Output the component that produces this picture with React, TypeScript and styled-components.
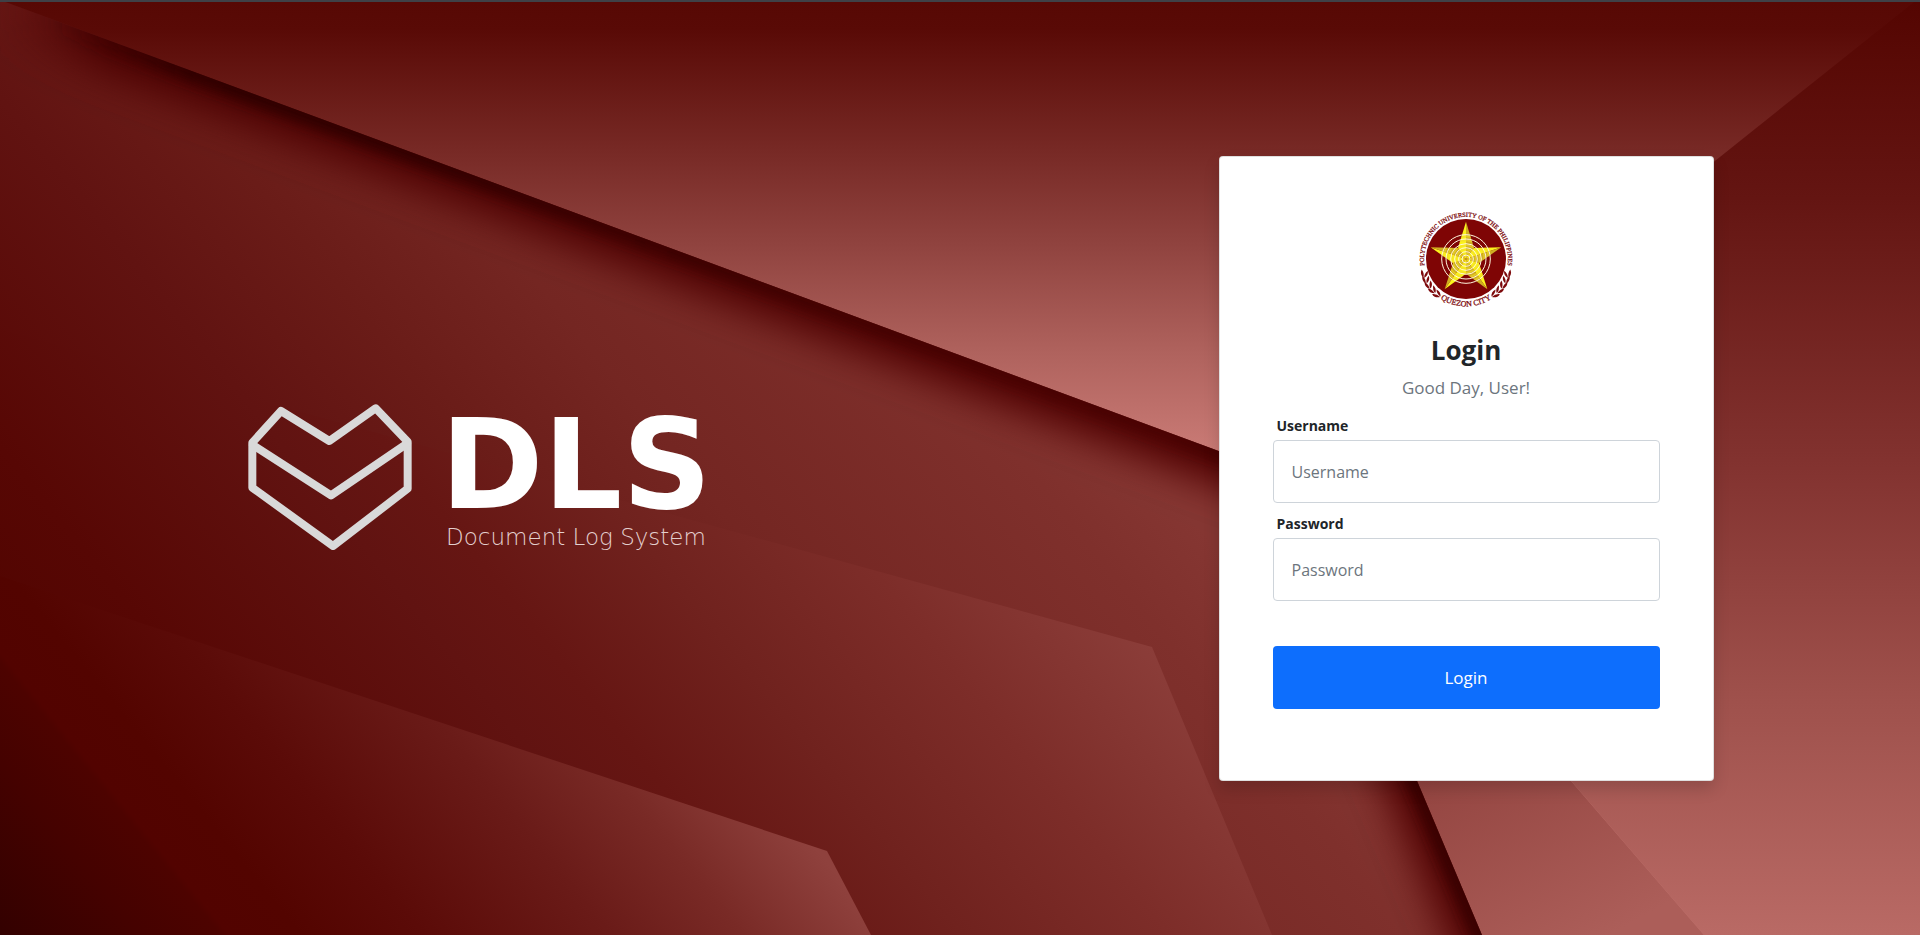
import React from "react";
import styled, { createGlobalStyle } from "styled-components";

const GlobalStyle = createGlobalStyle`
  *, *::before, *::after { box-sizing: border-box; }
  body {
    margin: 0;
    background: #520603;
    color: #212529;
    font-family: "Open Sans", "Noto Sans", sans-serif;
  }
`;

const Page = styled.div`
  position: relative;
  isolation: isolate;
  display: flex;
  flex-direction: column;
  min-height: 100vh;
  overflow: hidden;
  border-top: 2px solid #3f4147;
`;

const BackdropSvg = styled.svg`
  position: absolute;
  inset: 0;
  z-index: -1;
  width: 100%;
  height: 100%;
`;

const Main = styled.main`
  flex: 1;
  display: grid;
  grid-template-columns: 1fr 1fr;
  align-items: center;
`;

const Brand = styled.section`
  display: flex;
  justify-content: center;
  align-items: center;
  gap: 28px;
  padding-top: 16px;
`;

const BrandMark = styled.svg`
  width: 164px;
  height: 146px;
  flex: none;
`;

const BrandText = styled.div`
  display: flex;
  flex-direction: column;
  align-items: center;
`;

const BrandName = styled.h1`
  margin: 0;
  color: #fff;
  font-family: "DejaVu Sans", sans-serif;
  font-size: 124px;
  font-weight: 700;
  line-height: 120px;
`;

const Tagline = styled.p`
  margin: 0;
  color: #e3cfce;
  font-family: "DejaVu Sans", sans-serif;
  font-size: 23px;
  font-weight: 200;
  line-height: 24px;
`;

const FormColumn = styled.section`
  display: flex;
  justify-content: center;
  padding-left: 52px;
`;

const Card = styled.div`
  width: 495px;
  padding: 52px 53px 71px;
  display: flex;
  flex-direction: column;
  align-items: center;
  background: #fff;
  background-clip: border-box;
  border: 1px solid rgba(0, 0, 0, 0.125);
  border-radius: 4px;
  box-shadow: 0 8px 16px rgba(0, 0, 0, 0.15);
`;

const SealSvg = styled.svg`
  width: 100px;
  height: 100px;
`;

const Title = styled.h2`
  margin: 25px 0 0;
  font-size: 26px;
  font-weight: 700;
  line-height: 32px;
`;

const Greeting = styled.p`
  margin: 10px 0 14px;
  color: #6c757d;
  font-size: 17px;
  line-height: 24px;
`;

const Form = styled.form`
  width: 100%;
  display: flex;
  flex-direction: column;
`;

const Field = styled.div`
  display: flex;
  flex-direction: column;
  gap: 2px;
  margin-bottom: 9px;
`;

const Label = styled.label`
  padding: 0 4px;
  font-size: 14px;
  font-weight: 700;
  line-height: 24px;
`;

const TextInput = styled.input`
  width: 100%;
  height: 63px;
  padding: 16px 18px;
  color: #212529;
  background: #fff;
  border: 1px solid #ced4da;
  border-radius: 4px;
  font: inherit;
  font-size: 16px;

  &::placeholder {
    color: #6c757d;
    opacity: 1;
  }
`;

const SubmitButton = styled.button`
  height: 63px;
  margin-top: 36px;
  color: #fff;
  background: #0d6efd;
  border: 0;
  border-radius: 4px;
  font: inherit;
  font-size: 17px;
  cursor: pointer;
`;

function Backdrop() {
  return (
    <BackdropSvg viewBox="0 0 1920 933" preserveAspectRatio="none" aria-hidden="true">
      <defs>
        <linearGradient id="sky" gradientUnits="userSpaceOnUse" x1="0" y1="0" x2="0" y2="460">
          <stop offset="0" stopColor="#570804" />
          <stop offset="0.06" stopColor="#590a06" />
          <stop offset="0.33" stopColor="#782a26" />
          <stop offset="0.52" stopColor="#8f423e" />
          <stop offset="0.76" stopColor="#af625d" />
          <stop offset="1" stopColor="#cc7d78" />
        </linearGradient>
        <linearGradient id="right" gradientUnits="userSpaceOnUse" x1="0" y1="0" x2="0" y2="933">
          <stop offset="0" stopColor="#540501" />
          <stop offset="0.21" stopColor="#641512" />
          <stop offset="0.5" stopColor="#833330" />
          <stop offset="0.75" stopColor="#9f514c" />
          <stop offset="1" stopColor="#b96a65" />
        </linearGradient>
        <linearGradient id="wedge" gradientUnits="userSpaceOnUse" x1="1440" y1="740" x2="1560" y2="960">
          <stop offset="0" stopColor="#91423e" />
          <stop offset="1" stopColor="#ac5e59" />
        </linearGradient>
        <linearGradient id="sheet" gradientUnits="userSpaceOnUse" x1="-465" y1="378" x2="465" y2="-378">
          <stop offset="0.14" stopColor="#480200" />
          <stop offset="0.15" stopColor="#510400" />
          <stop offset="0.26" stopColor="#570704" />
          <stop offset="0.45" stopColor="#611311" />
          <stop offset="0.57" stopColor="#6a1c18" />
          <stop offset="0.7" stopColor="#742622" />
          <stop offset="0.92" stopColor="#7f302c" />
          <stop offset="1" stopColor="#853632" />
        </linearGradient>
        <linearGradient id="fold" gradientUnits="userSpaceOnUse" x1="-388" y1="315" x2="388" y2="-315">
          <stop offset="0.08" stopColor="#510400" />
          <stop offset="0.22" stopColor="#570704" />
          <stop offset="0.44" stopColor="#611311" />
          <stop offset="0.52" stopColor="#661613" />
          <stop offset="0.66" stopColor="#70221e" />
          <stop offset="0.82" stopColor="#7d2d29" />
          <stop offset="1" stopColor="#8c3e3a" />
        </linearGradient>
        <linearGradient id="corner" gradientUnits="userSpaceOnUse" x1="-457" y1="371" x2="78" y2="-63">
          <stop offset="0" stopColor="#330100" />
          <stop offset="0.16" stopColor="#450200" />
          <stop offset="0.25" stopColor="#4d0300" />
          <stop offset="0.26" stopColor="#520300" />
          <stop offset="0.34" stopColor="#530400" />
          <stop offset="0.48" stopColor="#5b0b08" />
          <stop offset="0.69" stopColor="#6a1b18" />
          <stop offset="0.84" stopColor="#792a26" />
          <stop offset="1" stopColor="#8f413d" />
        </linearGradient>
        <linearGradient id="shade" gradientUnits="userSpaceOnUse" x1="0" y1="0" x2="1300" y2="0">
          <stop offset="0" stopColor="#500300" stopOpacity="0" />
          <stop offset="0.08" stopColor="#4c0200" />
          <stop offset="1" stopColor="#500300" />
        </linearGradient>
        <linearGradient id="core" gradientUnits="userSpaceOnUse" x1="0" y1="0" x2="1300" y2="0">
          <stop offset="0.04" stopColor="#300000" stopOpacity="0" />
          <stop offset="0.15" stopColor="#300000" />
          <stop offset="0.35" stopColor="#300000" stopOpacity="0.9" />
          <stop offset="0.6" stopColor="#380000" stopOpacity="0.6" />
          <stop offset="0.9" stopColor="#400000" stopOpacity="0.4" />
          <stop offset="1" stopColor="#300000" stopOpacity="0.7" />
        </linearGradient>
        <filter id="soft" filterUnits="userSpaceOnUse" x="-100" y="-100" width="1800" height="1200">
          <feGaussianBlur stdDeviation="19" />
        </filter>
        <filter id="tight" filterUnits="userSpaceOnUse" x="-100" y="-100" width="1800" height="1200">
          <feGaussianBlur stdDeviation="6" />
        </filter>
        <clipPath id="sheetClip">
          <path d="M0 -2 L1289 475 L1482 933 L0 933 Z" />
        </clipPath>
      </defs>
      <rect width="1920" height="933" fill="url(#sky)" />
      <path d="M1914 0 L1920 0 L1920 933 L1704 933 L1313 480 Z" fill="url(#right)" />
      <path d="M1313 480 L1704 933 L1440 933 L1280 475 Z" fill="url(#wedge)" />
      <g clipPath="url(#sheetClip)">
        <rect width="1500" height="933" fill="url(#sheet)" />
        <path d="M-60 -24 L1289 475 L1520 1023" fill="none" stroke="url(#shade)" strokeWidth="64" filter="url(#soft)" />
        <path d="M-60 -24 L1289 475 L1520 1023" fill="none" stroke="url(#core)" strokeWidth="22" filter="url(#tight)" />
        <path d="M0 327 L1152 645 L1272 933 L0 933 Z" fill="url(#fold)" />
        <path d="M0 574 L827 849 L871 933 L0 933 Z" fill="url(#corner)" />
      </g>
    </BackdropSvg>
  );
}

function Mark() {
  return (
    <BrandMark viewBox="55 39 492 438" role="img" aria-label="DLS logo">
      <g fill="none" stroke="#d9d9d9" strokeWidth="24" strokeLinejoin="round" strokeLinecap="round">
        <path d="M68 155 L154 60 L299 150 L438 52 L534 152 L534 293 L310 465 L68 290 Z" />
        <path d="M70 162 L304 313 L532 158" />
      </g>
    </BrandMark>
  );
}

const STAR_OUTER = [[0, -112], [106, -35], [64, 91], [-64, 91], [-106, -35]];
const STAR_INNER = [[24, -33], [39, 12], [0, 44], [-39, 12], [-24, -33]];
const RINGS = [73, 60, 46, 34, 22, 12];

function Leaves({ mirrored = false }: { mirrored?: boolean }) {
  const sprigs = [
    [-126, 46, 8], [-121, 63, -4], [-112, 79, -18], [-100, 94, -34], [-86, 107, -50],
  ];
  return (
    <g transform={mirrored ? "scale(-1 1)" : undefined} fill="#7d0a0c">
      {sprigs.map(([x, y, r]) => (
        <g key={y} transform={`translate(${x} ${y}) rotate(${r})`}>
          <path d="M0 11 Q-13 2 -9 -13 Q1 -4 0 11 Z" />
          <path d="M2 11 Q0 -2 10 -12 Q14 2 2 11 Z" />
        </g>
      ))}
    </g>
  );
}

function Seal() {
  return (
    <SealSvg viewBox="-150 -150 300 300" role="img" aria-label="University seal">
      <defs>
        <path id="arcTop" d="M-119 41 A126 126 0 1 1 119 41" />
        <path id="arcBottom" d="M-110 90 A142 142 0 0 0 110 90" />
        <clipPath id="starClip">
          <path d={"M" + STAR_OUTER.map((p, i) => `${p} L${STAR_INNER[i]}`).join(" L") + " Z"} />
        </clipPath>
      </defs>
      <circle r="120" fill="#7f0505" />
      {STAR_OUTER.map((p, i) => (
        <g key={i}>
          <path d={`M0 0 L${p} L${STAR_INNER[(i + 4) % 5]} Z`} fill="#fbf31c" />
          <path d={`M0 0 L${p} L${STAR_INNER[i]} Z`} fill="#cfae22" />
        </g>
      ))}
      <g clipPath="url(#starClip)" fill="none" stroke="#f1dc2a" strokeOpacity="0.6" strokeWidth="5">
        {RINGS.map((r) => (
          <circle key={r} r={r - 5} />
        ))}
      </g>
      <g fill="none" stroke="#fff5dc" strokeWidth="3">
        {RINGS.map((r) => (
          <circle key={r} r={r} />
        ))}
      </g>
      <g fill="#7d0a0c" stroke="#7d0a0c" strokeWidth="0.8" fontFamily="Liberation Serif, serif" textAnchor="middle">
        <text fontSize="19">
          <textPath href="#arcTop" startOffset="50%">POLYTECHNIC UNIVERSITY OF THE PHILIPPINES</textPath>
        </text>
        <text fontSize="24">
          <textPath href="#arcBottom" startOffset="50%">QUEZON CITY</textPath>
        </text>
      </g>
      <Leaves />
      <Leaves mirrored />
    </SealSvg>
  );
}

export default function App() {
  return (
    <Page>
      <GlobalStyle />
      <Backdrop />
      <Main>
        <Brand>
          <Mark />
          <BrandText>
            <BrandName>DLS</BrandName>
            <Tagline>Document Log System</Tagline>
          </BrandText>
        </Brand>
        <FormColumn>
          <Card>
            <Seal />
            <Title>Login</Title>
            <Greeting>Good Day, User!</Greeting>
            <Form onSubmit={(e: React.FormEvent) => e.preventDefault()}>
              <Field>
                <Label htmlFor="username">Username</Label>
                <TextInput id="username" type="text" placeholder="Username" />
              </Field>
              <Field>
                <Label htmlFor="password">Password</Label>
                <TextInput id="password" type="password" placeholder="Password" />
              </Field>
              <SubmitButton type="submit">Login</SubmitButton>
            </Form>
          </Card>
        </FormColumn>
      </Main>
    </Page>
  );
}
